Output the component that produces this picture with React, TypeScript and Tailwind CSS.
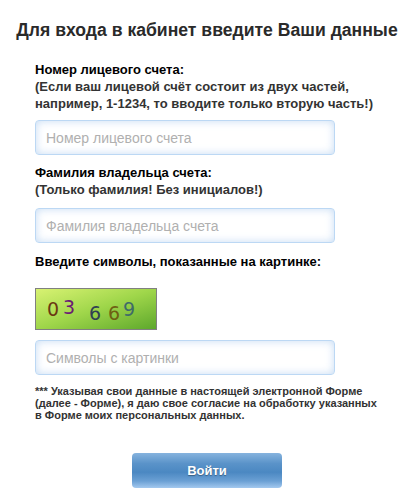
import React from "react";

const Field = ({ placeholder }: { placeholder: string }) => (
  <input
    placeholder={placeholder}
    className="block w-[300px] h-[35px] rounded-[4px] border border-[#bcd8f4] bg-white px-[10px] text-[14px] text-[#333] placeholder:text-[#b0b0b0] shadow-[inset_0_0_8px_rgba(150,190,235,0.55)] outline-none"
    style={{ fontFamily: '"Liberation Sans", Arial, sans-serif' }}
  />
);

export default function App() {
  return (
    <div
      className="w-[414px] h-[503px] bg-white text-[#222]"
      style={{ fontFamily: '"Liberation Sans", Arial, sans-serif' }}
    >
      <h1 className="pt-[20px] text-center text-[17.6px] font-bold leading-[20px] text-[#2a2a2a]">
        Для входа в кабинет введите Ваши данные
      </h1>
      <div className="pl-[35px] pt-[21px]">
        <div className="text-[13px] font-bold leading-[17px]">
          <div className="text-black">Номер лицевого счета:</div>
          <div className="text-[#333]">
            (Если ваш лицевой счёт состоит из двух частей,
            <br />
            например, 1-1234, то вводите только вторую часть!)
          </div>
        </div>
        <div className="mt-[8px]">
          <Field placeholder="Номер лицевого счета" />
        </div>
        <div className="mt-[9px] text-[13px] font-bold leading-[17px]">
          <div className="text-black">Фамилия владельца счета:</div>
          <div className="text-[#333]">(Только фамилия! Без инициалов!)</div>
        </div>
        <div className="mt-[10px]">
          <Field placeholder="Фамилия владельца счета" />
        </div>
        <div className="mt-[10px] text-[13px] font-bold leading-[17px] text-black">
          Введите символы, показанные на картинке:
        </div>
        <div
          className="mt-[18px] relative w-[122px] h-[42px] border border-[#808080] bg-gradient-to-br from-[#d8f272] via-[#9fd64a] to-[#5da82c]"
          style={{ fontFamily: '"DejaVu Sans", sans-serif' }}
        >
          <span className="absolute left-[11px] top-[11px] text-[19px] leading-none text-[#6a3812]">0</span>
          <span className="absolute left-[27px] top-[9px] text-[19px] leading-none text-[#6b1c74]">3</span>
          <span className="absolute left-[53px] top-[15px] text-[19px] leading-none text-[#2f4052]">6</span>
          <span className="absolute left-[72px] top-[15px] text-[19px] leading-none text-[#6e6012]">6</span>
          <span className="absolute left-[87px] top-[11px] text-[19px] leading-none text-[#3f6a6a]">9</span>
        </div>
        <div className="mt-[10px]">
          <Field placeholder="Символы с картинки" />
        </div>
        <div className="mt-[10px] text-[11px] font-bold leading-[12px] text-[#333]">
          *** Указывая свои данные в настоящей электронной Форме
          <br />
          (далее - Форме), я даю свое согласие на обработку указанных
          <br />в Форме моих персональных данных.
        </div>
      </div>
      <div className="mt-[32px] flex justify-center">
        <button
          className="w-[150px] h-[35px] rounded-[4px] text-white text-[13px] font-bold bg-[linear-gradient(to_bottom,#86b3de_0%,#5a93c9_30%,#4b88c2_55%,#6ba0d4_80%,#a4c9ef_100%)] [text-shadow:0_1px_1px_rgba(0,0,0,0.35)]"
          style={{ fontFamily: '"Liberation Sans", Arial, sans-serif' }}
        >
          Войти
        </button>
      </div>
    </div>
  );
}
